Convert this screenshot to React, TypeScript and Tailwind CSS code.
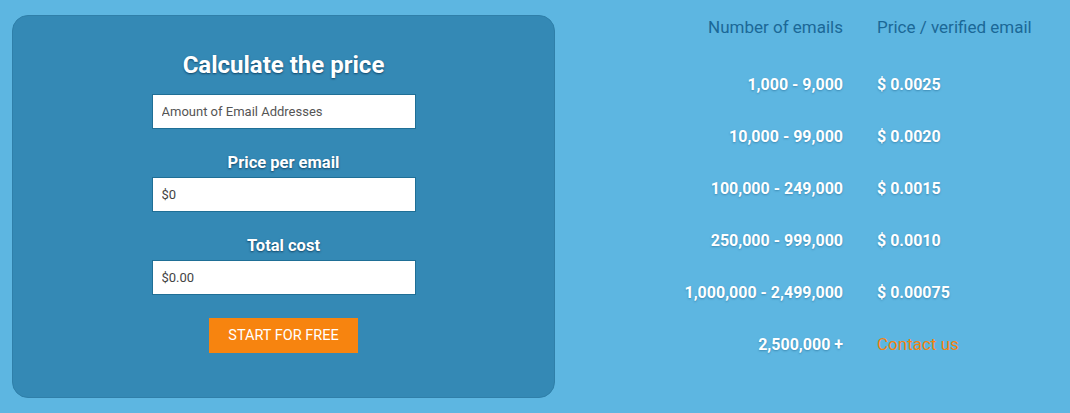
import React from "react";

const tiers = [
  { range: "1,000 - 9,000", price: "$ 0.0025" },
  { range: "10,000 - 99,000", price: "$ 0.0020" },
  { range: "100,000 - 249,000", price: "$ 0.0015" },
  { range: "250,000 - 999,000", price: "$ 0.0010" },
  { range: "1,000,000 - 2,499,000", price: "$ 0.00075" },
];

function Field({ value, placeholder }: { value?: string; placeholder?: string }) {
  return (
    <input
      readOnly
      value={value}
      placeholder={placeholder}
      className="w-[264px] h-[35px] bg-white border border-[#1f6f96] px-[9px] text-[13px] text-[#444] placeholder:text-[#555] outline-none"
    />
  );
}

export default function App() {
  return (
    <div className="w-[1070px] h-[413px] bg-[#5db6e1] flex font-['Roboto',sans-serif] overflow-hidden">
      {/* Calculator card */}
      <div className="ml-[12px] mt-[15px] w-[543px] h-[383px] rounded-[16px] bg-[#3489b5] border border-[#2f7fa9] flex flex-col items-center pt-[35px]">
        <h2 className="text-[24px] leading-[28px] font-bold text-white [text-shadow:0_1px_2px_rgba(0,40,70,0.7)]">
          Calculate the price
        </h2>
        <div className="mt-[15px]">
          <Field placeholder="Amount of Email Addresses" />
        </div>
        <label className="mt-[24px] text-[16.5px] leading-[20px] font-bold text-white [text-shadow:0_1px_2px_rgba(0,40,70,0.7)]">
          Price per email
        </label>
        <div className="mt-[4px]">
          <Field value="$0" />
        </div>
        <label className="mt-[24px] text-[16.5px] leading-[20px] font-bold text-white [text-shadow:0_1px_2px_rgba(0,40,70,0.7)]">
          Total cost
        </label>
        <div className="mt-[4px]">
          <Field value="$0.00" />
        </div>
        <button className="mt-[23px] w-[149px] h-[35px] bg-[#f7840f] text-white text-[14.5px] uppercase">
          Start for free
        </button>
      </div>

      {/* Pricing table */}
      <div className="ml-[45px] mt-[18px] flex flex-col">
        <div className="flex h-[20px] items-center text-[17px] text-[#1b6897]">
          <div className="w-[243px] text-right">Number of emails</div>
          <div className="ml-[34px]">Price / verified email</div>
        </div>
        <div className="mt-[37px] flex flex-col gap-[32px]">
          {tiers.map((t) => (
            <div key={t.range} className="flex h-[20px] items-center text-[16px] font-bold text-white [text-shadow:0_1px_2px_rgba(0,60,100,0.35)]">
              <div className="w-[243px] text-right">{t.range}</div>
              <div className="ml-[34px]">{t.price}</div>
            </div>
          ))}
          <div className="flex h-[20px] items-center">
            <div className="w-[243px] text-right text-[16px] font-bold text-white [text-shadow:0_1px_2px_rgba(0,60,100,0.35)]">2,500,000 +</div>
            <div className="ml-[34px] text-[17px] text-[#f5820f]">Contact us</div>
          </div>
        </div>
      </div>
    </div>
  );
}
